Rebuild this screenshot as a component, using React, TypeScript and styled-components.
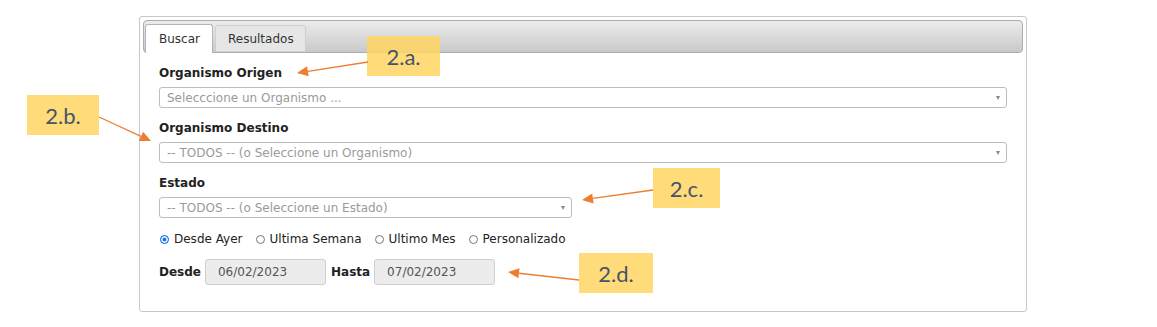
import React from "react";
import styled, { createGlobalStyle } from "styled-components";

const Global = createGlobalStyle`
  html, body { margin: 0; padding: 0; background: #fff; }
  body { font-family: "DejaVu Sans", Verdana, sans-serif; font-size: 12px; color: #222; }
`;

const Page = styled.div`
  position: relative;
  width: 1157px;
  height: 327px;
  padding: 16px 0 0 139px;
  box-sizing: border-box;
`;

const Panel = styled.div`
  width: 888px;
  height: 296px;
  box-sizing: border-box;
  border: 1px solid #c8c8c8;
  border-radius: 3px;
  padding: 3px;
  background: #fff;
`;

const TabBar = styled.div`
  height: 33px;
  box-sizing: border-box;
  border: 1px solid #acacac;
  border-radius: 4px;
  background: linear-gradient(#ececec, #c9c9c9);
  display: flex;
  align-items: flex-end;
  gap: 2px;
  padding: 0 0 0 1px;
`;

const Tab = styled.div<{ $active?: boolean }>`
  box-sizing: border-box;
  height: ${(p) => (p.$active ? "29px" : "27px")};
  margin-bottom: ${(p) => (p.$active ? "-1px" : "0")};
  padding: 0 ${(p) => (p.$active ? "12px" : "11px")} 0 ${(p) => (p.$active ? "13px" : "12px")};
  display: flex;
  align-items: center;
  border: 1px solid ${(p) => (p.$active ? "#b5b5b5" : "#cfcfcf")};
  border-bottom: ${(p) => (p.$active ? "none" : "1px solid #cfcfcf")};
  border-radius: 3px 3px 0 0;
  background: ${(p) => (p.$active ? "#fff" : "#e6e6e6")};
  color: #333;
  font-size: 12px;
`;

const Content = styled.div`
  padding: 11px 0 0 16px;
  display: flex;
  flex-direction: column;
`;

const Label = styled.div`
  font-weight: bold;
  font-size: 12px;
  line-height: 18px;
  color: #222;
  margin-bottom: 5px;
`;

const Group = styled.div`
  display: flex;
  flex-direction: column;
  margin-bottom: 11px;
`;

const Select = styled.div<{ $width: number }>`
  width: ${(p) => p.$width}px;
  height: 21px;
  box-sizing: border-box;
  border: 1px solid #bdbdbd;
  border-radius: 3px;
  background: #fff;
  display: flex;
  align-items: center;
  justify-content: space-between;
  padding: 0 6px 0 7px;
  color: #9a9a9a;
  font-size: 12px;
`;

const Caret = styled.span`
  width: 0;
  height: 0;
  border-left: 2.5px solid transparent;
  border-right: 2.5px solid transparent;
  border-top: 4px solid #888;
`;

const RadioRow = styled.div`
  display: flex;
  align-items: center;
  height: 18px;
  margin: 1px 0 11px;
  gap: 12px;
`;

const RadioItem = styled.label`
  display: flex;
  align-items: center;
  gap: 5px;
  color: #222;
  font-size: 12px;
  padding-left: 1px;
`;

const RadioDot = styled.span<{ $checked?: boolean }>`
  width: 9px;
  height: 9px;
  box-sizing: border-box;
  border-radius: 50%;
  border: 1px solid ${(p) => (p.$checked ? "#1a73e8" : "#777")};
  background: ${(p) => (p.$checked ? "#1a73e8" : "#fff")};
  box-shadow: ${(p) => (p.$checked ? "inset 0 0 0 1.5px #fff" : "none")};
`;

const DateRow = styled.div`
  display: flex;
  align-items: center;
  gap: 4px;
`;

const DateLabel = styled.span`
  font-weight: bold;
  font-size: 12px;
  color: #222;
`;

const DateInput = styled.div`
  width: 121px;
  height: 26px;
  box-sizing: border-box;
  border: 1px solid #cfcfcf;
  border-radius: 3px;
  background: #ececec;
  color: #555;
  font-size: 12px;
  display: flex;
  align-items: center;
  padding-left: 12px;
  margin-right: 1px;
`;

const Note = styled.div<{ $x: number; $y: number; $w: number }>`
  position: absolute;
  left: ${(p) => p.$x}px;
  top: ${(p) => p.$y}px;
  width: ${(p) => p.$w}px;
  height: 40px;
  background: rgba(255, 214, 98, 0.85);
  color: #44546a;
  font-family: Lato, "Open Sans", sans-serif;
  font-size: 22px;
  display: flex;
  align-items: center;
  justify-content: center;
`;

const Overlay = styled.svg`
  position: absolute;
  left: 0;
  top: 0;
  pointer-events: none;
`;

const arrows: [number, number, number, number][] = [
  [368, 62, 297, 73],
  [99, 117, 151, 141],
  [653, 190, 582, 200],
  [579, 280, 508, 272],
];

function Arrow({ x1, y1, x2, y2 }: { x1: number; y1: number; x2: number; y2: number }) {
  const dx = x2 - x1;
  const dy = y2 - y1;
  const len = Math.hypot(dx, dy);
  const ux = dx / len;
  const uy = dy / len;
  const hl = 11;
  const hw = 5;
  const bx = x2 - ux * hl;
  const by = y2 - uy * hl;
  const p1 = `${bx - uy * hw},${by + ux * hw}`;
  const p2 = `${bx + uy * hw},${by - ux * hw}`;
  return (
    <g>
      <line x1={x1} y1={y1} x2={bx} y2={by} stroke="#ed7d31" strokeWidth={1.3} />
      <polygon points={`${x2},${y2} ${p1} ${p2}`} fill="#ed7d31" />
    </g>
  );
}

export default function App() {
  return (
    <>
      <Global />
      <Page>
        <Panel>
          <TabBar>
            <Tab $active>Buscar</Tab>
            <Tab>Resultados</Tab>
          </TabBar>
          <Content>
            <Group>
              <Label>Organismo Origen</Label>
              <Select $width={848}>
                <span>Selecccione un Organismo ...</span>
                <Caret />
              </Select>
            </Group>
            <Group>
              <Label>Organismo Destino</Label>
              <Select $width={848}>
                <span>-- TODOS -- (o Seleccione un Organismo)</span>
                <Caret />
              </Select>
            </Group>
            <Group>
              <Label>Estado</Label>
              <Select $width={413}>
                <span>-- TODOS -- (o Seleccione un Estado)</span>
                <Caret />
              </Select>
            </Group>
            <RadioRow>
              <RadioItem>
                <RadioDot $checked />
                Desde Ayer
              </RadioItem>
              <RadioItem>
                <RadioDot />
                Ultima Semana
              </RadioItem>
              <RadioItem>
                <RadioDot />
                Ultimo Mes
              </RadioItem>
              <RadioItem>
                <RadioDot />
                Personalizado
              </RadioItem>
            </RadioRow>
            <DateRow>
              <DateLabel>Desde</DateLabel>
              <DateInput>06/02/2023</DateInput>
              <DateLabel>Hasta</DateLabel>
              <DateInput>07/02/2023</DateInput>
            </DateRow>
          </Content>
        </Panel>
        <Note $x={367} $y={36} $w={73}>2.a.</Note>
        <Note $x={27} $y={95} $w={72}>2.b.</Note>
        <Note $x={653} $y={168} $w={67}>2.c.</Note>
        <Note $x={579} $y={253} $w={74}>2.d.</Note>
        <Overlay width={1157} height={327}>
          {arrows.map(([x1, y1, x2, y2], i) => (
            <Arrow key={i} x1={x1} y1={y1} x2={x2} y2={y2} />
          ))}
        </Overlay>
      </Page>
    </>
  );
}
